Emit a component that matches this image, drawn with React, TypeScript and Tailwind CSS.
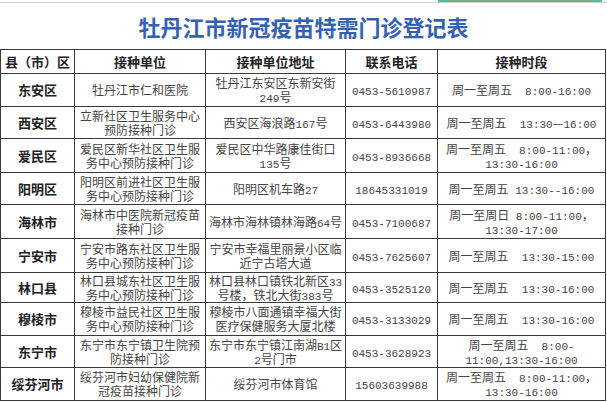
import React from "react";

type Row = {
	area: string;
	unit: string[];
	addr: string[];
	phone: string;
	time: string[];
	h: string;
};

const rows: Row[] = [
	{ area: "东安区", unit: ["牡丹江市仁和医院"], addr: ["牡丹江东安区东新安街", "249号"], phone: "0453-5610987", time: ["周一至周五  8:00-16:00"], h: "h-[33px]" },
	{ area: "西安区", unit: ["立新社区卫生服务中心", "预防接种门诊"], addr: ["西安区海浪路167号"], phone: "0453-6443980", time: ["周一至周五  13:30—16:00"], h: "h-[32px]" },
	{ area: "爱民区", unit: ["爱民区新华社区卫生服", "务中心预防接种门诊"], addr: ["爱民区中华路康佳街口", "135号"], phone: "0453-8936668", time: ["周一至周五  8:00-11:00，", "13:30-16:00"], h: "h-[34px]" },
	{ area: "阳明区", unit: ["阳明区前进社区卫生服", "务中心预防接种门诊"], addr: ["阳明区机车路27"], phone: "18645331019", time: ["周一至周五 13:30--16:00"], h: "h-[32px]" },
	{ area: "海林市", unit: ["海林市中医院新冠疫苗", "接种门诊"], addr: ["海林市海林镇林海路64号"], phone: "0453-7100687", time: ["周一至周日 8:00-11:00，", "13:30-17:00"], h: "h-[34px]" },
	{ area: "宁安市", unit: ["宁安市路东社区卫生服", "务中心预防接种门诊"], addr: ["宁安市幸福里丽景小区临", "近宁古塔大道"], phone: "0453-7625607", time: ["周一至周五  13:30-15:00"], h: "h-[34px]" },
	{ area: "林口县", unit: ["林口县城东社区卫生服", "务中心预防接种门诊"], addr: ["林口县林口镇铁北新区33", "号楼，铁北大街383号"], phone: "0453-3525120", time: ["周一至周五  13:30-16:00"], h: "h-[30px]" },
	{ area: "穆棱市", unit: ["穆棱市益民社区卫生服", "务中心预防接种门诊"], addr: ["穆棱市八面通镇幸福大街", "医疗保健服务大厦北楼"], phone: "0453-3133029", time: ["周一至周五  13:30-16:00"], h: "h-[33px]" },
	{ area: "东宁市", unit: ["东宁市东宁镇卫生院预", "防接种门诊"], addr: ["东宁市东宁镇江南湖B1区", "2号门市"], phone: "0453-3628923", time: ["周一至周五  8:00-", "11:00,13:30-16:00"], h: "h-[32px]" },
	{ area: "绥芬河市", unit: ["绥芬河市妇幼保健院新", "冠疫苗接种门诊"], addr: ["绥芬河市体育馆"], phone: "15603639988", time: ["周一至周五  8:00-11:00，", "13:30-16:00"], h: "h-[33px]" },
];

// ASCII runs get a mono face, like the 宋体 digits in the sheet
function Txt({ s }: { s: string }) {
	return (
		<>
			{s.split(/([\x20-\x7E]+)/).map((part, i) =>
				/^[\x20-\x7E]/.test(part) ? (
					<span key={i} className="font-['Liberation_Mono',monospace] text-[11px] leading-none">
						{part}
					</span>
				) : (
					<React.Fragment key={i}>{part}</React.Fragment>
				),
			)}
		</>
	);
}

function Lines({ lines }: { lines: string[] }) {
	return (
		<>
			{lines.map((l) => (
				<div key={l} className="h-[14px] whitespace-pre leading-[14px]">
					<Txt s={l} />
				</div>
			))}
		</>
	);
}

const cell = "border border-[#3a3a3a] p-0 text-center align-middle";

export default function App() {
	return (
		<div className="w-[607px] h-[402px] overflow-hidden bg-white font-['Noto_Sans_CJK_SC',sans-serif]">
			{/* 上一张表的残边 */}
			<div className="relative h-[3px] border-b border-[#cfcfcf]">
				<div className="absolute left-[438px] top-0 h-[2px] w-[164px] bg-[#5fb88a]" />
			</div>

			<div className="flex h-[46px] items-center justify-center">
				<h1 className="text-[22px] font-bold text-[#3461b2]">牡丹江市新冠疫苗特需门诊登记表</h1>
			</div>

			<table className="table-fixed border-collapse w-[606px]">
				<colgroup>
					<col className="w-[74px]" />
					<col className="w-[131px]" />
					<col className="w-[140px]" />
					<col className="w-[92px]" />
					<col className="w-[168px]" />
				</colgroup>
				<thead>
					<tr className="h-[24px] text-[13px] font-bold text-[#222]">
						<th className={cell}>县（市）区</th>
						<th className={cell}>接种单位</th>
						<th className={cell}>接种单位地址</th>
						<th className={cell}>联系电话</th>
						<th className={cell}>接种时段</th>
					</tr>
				</thead>
				<tbody className="text-[12px] text-[#444]">
					{rows.map((r) => (
						<tr key={r.area} className={r.h}>
							<td className={`${cell} text-[13px] font-bold text-[#222]`}>
								<div className="h-[16px] leading-[16px]">{r.area}</div>
							</td>
							<td className={cell}>
								<Lines lines={r.unit} />
							</td>
							<td className={cell}>
								<Lines lines={r.addr} />
							</td>
							<td className={cell}>
								<Lines lines={[r.phone]} />
							</td>
							<td className={cell}>
								<Lines lines={r.time} />
							</td>
						</tr>
					))}
				</tbody>
			</table>
		</div>
	);
}
